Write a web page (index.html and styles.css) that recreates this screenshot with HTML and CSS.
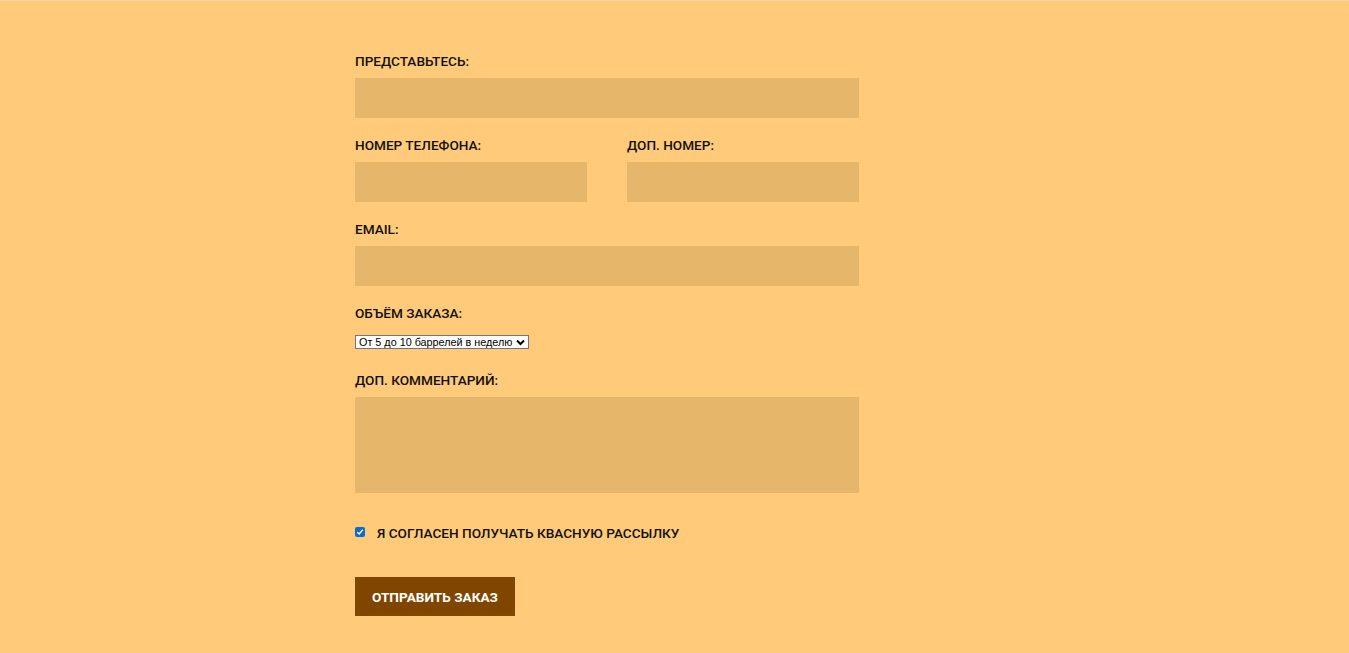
FILE: index.html
```html
<!DOCTYPE html>
<html lang="ru">
<head>
<meta charset="utf-8">
<title>Заказ</title>
<link rel="stylesheet" href="styles.css">
</head>
<body>
<div class="page">
  <form class="order-form">
    <div class="group">
      <label class="label">ПРЕДСТАВЬТЕСЬ:</label>
      <div class="field"></div>
    </div>
    <div class="row">
      <div class="group">
        <label class="label">НОМЕР ТЕЛЕФОНА:</label>
        <div class="field"></div>
      </div>
      <div class="group">
        <label class="label">ДОП. НОМЕР:</label>
        <div class="field"></div>
      </div>
    </div>
    <div class="group">
      <label class="label">EMAIL:</label>
      <div class="field"></div>
    </div>
    <div class="group group-select">
      <label class="label">ОБЪЁМ ЗАКАЗА:</label>
      <div class="select">
        <span class="select-text">От 5 до 10 баррелей в неделю</span>
        <svg class="chev" width="9" height="7" viewBox="0 0 9 7"><path d="M1 1.5 L4.5 5 L8 1.5" fill="none" stroke="#000" stroke-width="2"/></svg>
      </div>
    </div>
    <div class="group">
      <label class="label">ДОП. КОММЕНТАРИЙ:</label>
      <div class="field field-area"></div>
    </div>
    <div class="agree">
      <span class="check">
        <svg width="8" height="8" viewBox="0 0 8 8"><path d="M1.3 4.2 L3.2 6 L6.8 1.8" fill="none" stroke="#fff" stroke-width="1.5"/></svg>
      </span>
      <span class="agree-text">Я СОГЛАСЕН ПОЛУЧАТЬ КВАСНУЮ РАССЫЛКУ</span>
    </div>
    <button class="submit" type="button">ОТПРАВИТЬ ЗАКАЗ</button>
  </form>
</div>
</body>
</html>
```
FILE: styles.css
```css
html, body {
  margin: 0;
  padding: 0;
  height: 100%;
}
body {
  background: #ffca7a;
  font-family: Roboto, "Liberation Sans", Arial, sans-serif;
  color: #111;
  border-top: 1px solid #f2d6a4;
  box-sizing: border-box;
}
.page {
  display: flex;
  padding-left: 355px;
  padding-top: 52px;
}
.order-form {
  width: 504px;
  display: flex;
  flex-direction: column;
}
.group {
  display: flex;
  flex-direction: column;
  margin-bottom: 19px;
}
.row {
  display: grid;
  grid-template-columns: 232px 232px;
  column-gap: 40px;
}
.label {
  font-size: 13.6px;
  font-weight: 500;
  line-height: 15px;
  padding-top: 1px;
  margin-bottom: 9px;
  color: #111;
}
.field {
  height: 40px;
  background: #e6b66a;
}
.field-area {
  height: 96px;
}
.group-select {
  margin-bottom: 23px;
}
.group-select .label {
  margin-bottom: 14px;
}
.select {
  align-self: flex-start;
  display: flex;
  align-items: center;
  gap: 4px;
  height: 14px;
  width: 174px;
  box-sizing: border-box;
  border: 1px solid #767676;
  background: #fff;
  padding: 0 3px 0 3px;
  font-family: "Liberation Sans", Arial, sans-serif;
  font-size: 10.8px;
  color: #000;
  overflow: hidden;
}
.select-text {
  white-space: nowrap;
  line-height: 12px;
}
.chev {
  flex: none;
}
.agree {
  display: flex;
  align-items: center;
  margin-top: 13px;
  height: 16px;
}
.check {
  width: 10px;
  height: 10px;
  border-radius: 2px;
  background: #0b69d4;
  display: flex;
  align-items: center;
  justify-content: center;
  margin-right: 12px;
  margin-top: -3px;
}
.agree-text {
  font-size: 13.6px;
  font-weight: 500;
  line-height: 16px;
}
.submit {
  align-self: flex-start;
  margin-top: 36px;
  width: 160px;
  height: 39px;
  background: #804600;
  color: #fff;
  border: none;
  font-family: Roboto, "Liberation Sans", Arial, sans-serif;
  font-size: 13.6px;
  font-weight: 700;
  padding: 0;
}
```
